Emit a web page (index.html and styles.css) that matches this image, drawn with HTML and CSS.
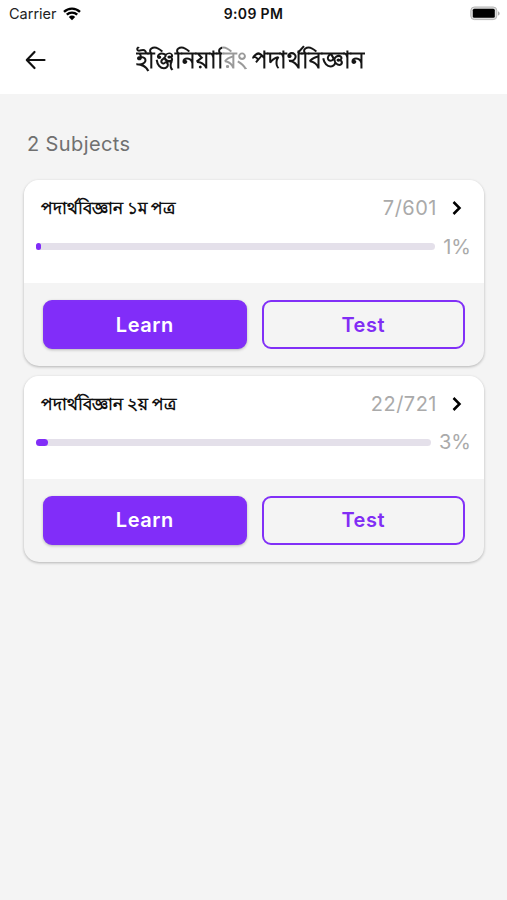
FILE: index.html
```html
<!DOCTYPE html>
<html lang="bn">
<head>
<meta charset="utf-8">
<meta name="viewport" content="width=device-width, initial-scale=1">
<title>ইঞ্জিনিয়ারিং পদার্থবিজ্ঞান</title>
<link rel="stylesheet" href="styles.css">
</head>
<body>
<header class="top">
  <div class="status">
    <div class="carrier"><span>Carrier</span>
      <svg class="wifi" viewBox="0 0 18 14" width="18" height="14"><path d="M1 4.8a11.6 11.6 0 0 1 16 0M3.8 7.7a7.6 7.6 0 0 1 10.4 0" fill="none" stroke="#000" stroke-width="2.4"/><path d="M5.8 10a4.7 4.7 0 0 1 6.4 0L9 13.2z"/></svg>
    </div>
    <div class="clock">9:09 PM</div>
    <svg class="battery" viewBox="0 0 30 15" width="30" height="15"><rect x=".8" y="1" width="26" height="12.6" rx="3.6" fill="#ddd" stroke="#b5b5b5"/><rect x="2.8" y="2.8" width="22" height="9" rx="1.5"/><path d="M28 5.2v4.4c2.2-.8 2.2-3.6 0-4.4z" fill="#aaa"/></svg>
  </div>
  <div class="bar">
    <svg class="back" viewBox="0 0 22 20" width="22" height="20"><path d="M9.5 2 1.8 10l7.7 8M2 10h17.5" fill="none" stroke="#111" stroke-width="2.2" stroke-linecap="round" stroke-linejoin="round"/></svg>
    <h1 class="title">ইঞ্জিনিয়ারিং পদার্থবিজ্ঞান</h1>
  </div>
</header>
<main class="content">
  <h2 class="count">2 Subjects</h2>
  <section class="card">
    <div class="info">
      <div class="row"><h3 class="name">পদার্থবিজ্ঞান ১ম পত্র</h3><span class="score">7/601</span>
        <svg class="chevron" viewBox="0 0 10 16" width="10" height="16"><path d="m1.5 2 6 6-6 6" fill="none" stroke="#000" stroke-width="2.5"/></svg></div>
      <div class="progress"><div class="track"><div class="fill" style="width:1.2%"></div></div><span class="percent">1%</span></div>
    </div>
    <div class="actions"><button class="btn learn">Learn</button><button class="btn test">Test</button></div>
  </section>
  <section class="card">
    <div class="info">
      <div class="row"><h3 class="name">পদার্থবিজ্ঞান ২য় পত্র</h3><span class="score">22/721</span>
        <svg class="chevron" viewBox="0 0 10 16" width="10" height="16"><path d="m1.5 2 6 6-6 6" fill="none" stroke="#000" stroke-width="2.5"/></svg></div>
      <div class="progress"><div class="track"><div class="fill" style="width:3.05%"></div></div><span class="percent">3%</span></div>
    </div>
    <div class="actions"><button class="btn learn">Learn</button><button class="btn test">Test</button></div>
  </section>
</main>
</body>
</html>
```
FILE: styles.css
```css
* { box-sizing: border-box; }
body { margin: 0; min-height: 900px; background: #f4f4f4; color: #111; font-family: Inter, "Noto Sans", sans-serif; }
h1, h2, h3 { margin: 0; }
svg { display: block; flex: none; }
.top { height: 94px; background: #fff; }
.status { height: 27px; padding: 0 7px 0 9px; display: grid; grid-template-columns: 1fr auto 1fr; align-items: center; }
.carrier { display: flex; align-items: center; gap: 6px; font-size: 14.5px; letter-spacing: 0; color: #222; }
.clock { padding-right: 2px; font-size: 14px; font-weight: 600; letter-spacing: .35px; }
.battery { justify-self: end; }
.bar { height: 66px; padding: 0 25px; display: grid; grid-template-columns: 22px 1fr 28px; align-items: center; }
.title { justify-self: center; font-size: 23.3px; line-height: 40px; font-weight: 600; white-space: nowrap; background: linear-gradient(90deg, #151515 86px, #999 86px 110px, #151515 110px); -webkit-background-clip: text; background-clip: text; color: transparent; }
.content { padding: 34px 23px 0 24px; }
.count { height: 32px; margin: 0 0 20px 3px; font-size: 20px; line-height: 33px; font-weight: 400; letter-spacing: .4px; color: #707070; }
.card { height: 186px; margin-bottom: 9.5px; border-radius: 15px; overflow: hidden; background: #f4f4f4; box-shadow: 0 1px 3px rgba(0,0,0,.27); }
.info { height: 103px; padding: 12px 13px 0 12px; background: #fff; }
.row { height: 32px; padding: 0 9px 0 5px; display: flex; align-items: center; }
.name { font-size: 17px; line-height: 30px; font-weight: 700; white-space: nowrap; }
.score { margin-left: auto; font-size: 20px; letter-spacing: .5px; color: #aaa; }
.chevron { margin-left: 15px; }
.progress { height: 32px; margin-top: 6.5px; display: flex; align-items: center; gap: 8px; }
.track { flex: 1; height: 7px; border-radius: 4px; background: #e4e0ea; }
.fill { height: 7px; border-radius: 4px; background: #812df8; }
.percent { font-size: 20px; letter-spacing: 0; color: #aaa; }
.actions { height: 83px; padding: 17px 19px; display: grid; grid-template-columns: 1fr 1fr; gap: 15px; }
.btn { height: 49px; border: 2px solid #8130f7; border-radius: 9px; font: 600 20px Inter, sans-serif; letter-spacing: .55px; }
.learn { background: #812df9; color: #fff; box-shadow: 0 1px 3px rgba(0,0,0,.25); }
.test { background: transparent; color: #812df5; }
```
